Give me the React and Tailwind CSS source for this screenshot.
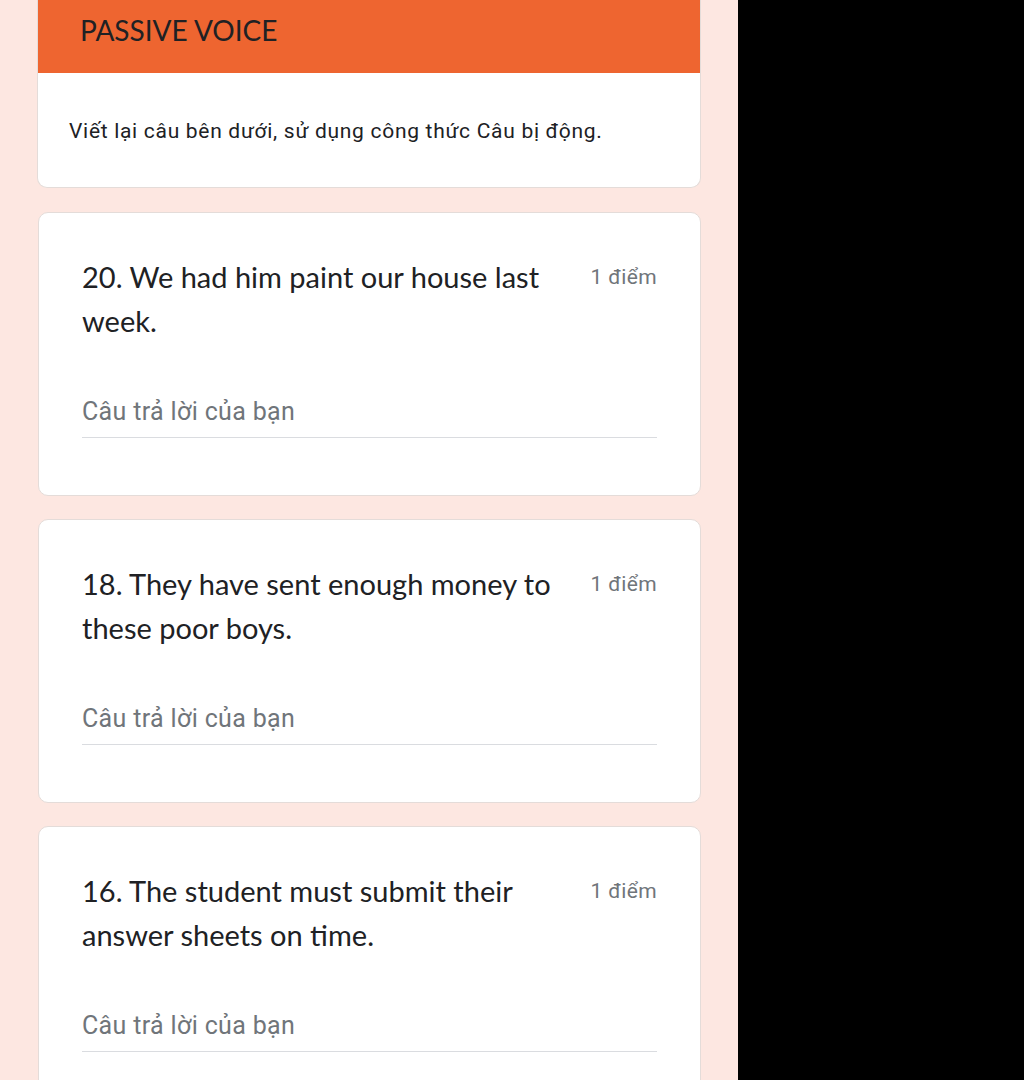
import React from 'react'

const questions = [
  { id: 20, text: '20. We had him paint our house last week.' },
  { id: 18, text: '18. They have sent enough money to these poor boys.' },
  { id: 16, text: '16. The student must submit their answer sheets on time.' },
]

function QuestionCard({ text }) {
  return (
    <div className="bg-white rounded-[10px] border border-[#e4dcd9] px-[43px] pt-[42px] pb-[57px]">
      <div className="flex items-start justify-between">
        <div className="w-[490px] text-[29px] leading-[44px] text-[#202124] font-['Lato','Open_Sans',sans-serif]">
          {text}
        </div>
        <div className="pt-[10px] text-[21px] leading-[24px] tracking-[0.4px] text-[#70757a] font-['Roboto',sans-serif]">
          1 điểm
        </div>
      </div>
      <div className="mt-[54px] border-b border-[#dadce0] pb-[10px] text-[25px] leading-[30px] tracking-[0.35px] text-[#70757a] font-['Roboto',sans-serif]">
        Câu trả lời của bạn
      </div>
    </div>
  )
}

export default function App() {
  return (
    <div className="flex h-[1080px] overflow-hidden bg-black">
      <div className="w-[738px] bg-[#fde7e1] pl-[37px] pr-[37px]">
        <div className="rounded-b-[10px] border border-t-0 border-[#e4dcd9] bg-white overflow-hidden">
          <div className="h-[73px] bg-[#ee6530] pl-[42px] pt-[10px] text-[28px] leading-[40px] text-[#202124] font-['Lato','Open_Sans',sans-serif]">
            PASSIVE VOICE
          </div>
          <div className="h-[114px] pl-[31px] pt-[44px] text-[21px] leading-[28px] tracking-[0.7px] text-[#202124] font-['Roboto',sans-serif]">
            Viết lại câu bên dưới, sử dụng công thức Câu bị động.
          </div>
        </div>
        <div className="flex flex-col gap-[23px] pt-[24px] pl-[1px]">
          {questions.map((q) => (
            <QuestionCard key={q.id} text={q.text} />
          ))}
        </div>
      </div>
    </div>
  )
}
